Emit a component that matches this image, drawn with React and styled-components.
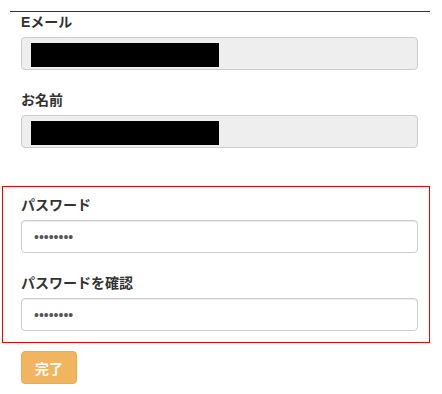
import React from 'react';
import styled, { createGlobalStyle } from 'styled-components';

const Global = createGlobalStyle`
body {
  margin: 0;
  background: #fff;
  font-family: "Liberation Sans", "Noto Sans CJK JP", sans-serif;
  color: #333;
}
`;

const Page = styled.div`
width: 442px;
height: 394px;
overflow: hidden;
`;

const Rule = styled.div`
margin: 11px 12px 0 10px;
border-top: 1px solid #333;
`;

const Profile = styled.div`
padding: 0 24px 0 21px;
`;

const Group = styled.div`
margin-bottom: ${p => p.$gap ?? 20}px;
`;

const Label = styled.label`
display: block;
font-size: 14px;
font-weight: bold;
line-height: 20px;
margin-bottom: 5px;
color: #333;
`;

const ReadonlyBox = styled.div`
box-sizing: border-box;
height: 33px;
padding: 5px 9px;
background: #eee;
border: 1px solid #ccc;
border-radius: 4px;
`;

const Redacted = styled.span`
display: block;
width: 188px;
height: 24px;
background: #000;
`;

const PasswordSection = styled.div`
margin: 38px 12px 0 2px;
padding: 8px 11px 11px 18px;
border: 1px solid #e00;
`;

const Input = styled.input`
display: block;
box-sizing: border-box;
width: 100%;
height: 33px;
padding: 6px 12px;
font-family: "Liberation Sans", sans-serif;
font-size: 14px;
color: #555;
background: #fff;
border: 1px solid #ccc;
border-radius: 4px;
box-shadow: inset 0 1px 1px rgba(0, 0, 0, 0.075);
outline: none;
`;

const Actions = styled.div`
padding: 8px 0 0 21px;
`;

const Button = styled.button`
width: 56px;
height: 33px;
font-family: "Noto Sans CJK JP", sans-serif;
font-size: 14px;
font-weight: bold;
color: #fff;
background: #f0ad4e;
border: 1px solid #eea236;
border-radius: 4px;
opacity: 0.9;
cursor: not-allowed;
`;

const App = () => {
    const fields = [
        { label: 'Eメール', gap: 20 },
        { label: 'お名前', gap: 0 },
    ];

    return (
        <Page>
            <Global />
            <Rule />
            <Profile>
                {fields.map(f => (
                    <Group key={f.label} $gap={f.gap}>
                        <Label>{f.label}</Label>
                        <ReadonlyBox><Redacted /></ReadonlyBox>
                    </Group>
                ))}
            </Profile>
            <PasswordSection>
                <Group $gap={20}>
                    <Label>パスワード</Label>
                    <Input type="password" defaultValue="12345678" readOnly />
                </Group>
                <Group $gap={0}>
                    <Label>パスワードを確認</Label>
                    <Input type="password" defaultValue="12345678" readOnly />
                </Group>
            </PasswordSection>
            <Actions>
                <Button disabled>完了</Button>
            </Actions>
        </Page>
    );
};

export default App;
